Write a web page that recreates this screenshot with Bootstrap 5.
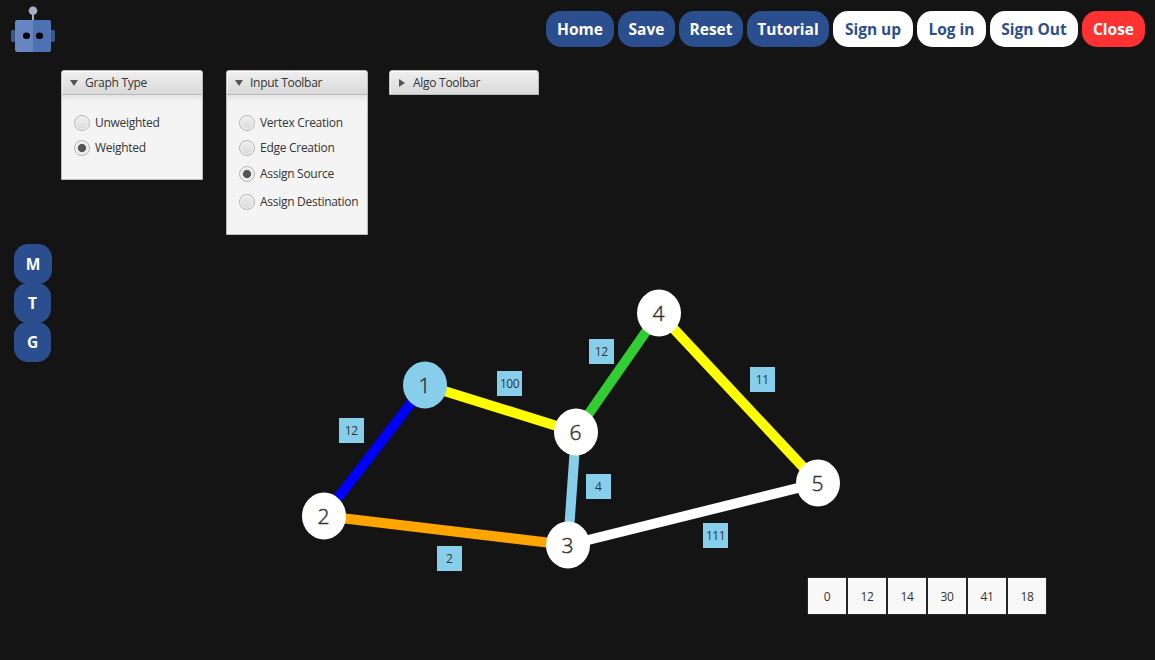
<!DOCTYPE html>
<html lang="en">
<head>
<meta charset="utf-8">
<meta name="viewport" content="width=device-width, initial-scale=1">
<title>Graph Visualizer</title>
<link rel="stylesheet" href="https://cdn.jsdelivr.net/npm/bootstrap@5.3.0/dist/css/bootstrap.min.css">
<style>
body{background:#141414;color:#333;font-family:"Open Sans","Noto Sans",sans-serif;font-size:12px;line-height:16px;overflow:hidden}
.app-btn{height:36px;border:0;border-radius:15px;padding:0;font-size:15.5px;line-height:34px;font-weight:700;background:#2b4f8e;color:#fff;text-align:center;white-space:nowrap}
.app-btn:hover{background:#35609f;color:#fff}
.app-btn.account{background:#fff;color:#2b4f8e}
.app-btn.quit{background:#ff3232}
.topbar{height:60px;padding:11px 10px 0 11px}
.robot{margin-top:-5px}
.side-rail{width:61px;padding:184px 0 0 14px}
.side-rail .app-btn{width:37px;height:40px;line-height:37px;border-radius:14px;margin-bottom:-1px}
.panels{padding-top:10px}
.tool-pane{border:1px solid #bababa;border-radius:3px 3px 0 0;background:#f4f4f4;overflow:hidden;letter-spacing:-.28px}
.tool-head{height:23px;padding:1px 0 0 8px;background:linear-gradient(#efefef,#d9d9d9);box-shadow:inset 0 1px #fff,inset 1px 0 #f5f5f5}
.tool-head svg{width:8px;height:8px;margin-right:7px}
.tool-body{border-top:1px solid #bababa;box-shadow:inset 0 6px 6px -4px #ddd;padding:20px 0 0 12px}
.choice{height:16px;gap:5px;white-space:nowrap}
.choice .form-check-input{width:16px;height:16px;margin:0;border:1px solid #b5b5b5;background:linear-gradient(#efefef,#dadada);box-shadow:inset 0 0 0 1px #f6f6f6;flex:none}
.choice .form-check-input:checked{background:radial-gradient(circle,#545454 0 3.7px,#e9e9e9 4.4px)}
.graph{position:absolute;left:0;top:0;width:1155px;height:660px;pointer-events:none}
.graph text{text-anchor:middle;fill:#333}
.dist{margin:0 108px 45px 0}
.dist span{width:40px;height:38px;border:1px solid #262626;background:#f8f8f8;line-height:38px;text-align:center;letter-spacing:-.3px}
</style>
</head>
<body>
<div class="vh-100 d-flex flex-column position-relative">
  <header class="topbar d-flex align-items-start">
    <svg class="robot" width="44" height="46" viewBox="0 0 44 46" aria-label="Robot">
      <path d="M0 25l1-1h3v12H1l-1-1zM44 25l-1-1h-3v12h3l1-1z" fill="#3b5788"/>
      <path d="M21 9h2v7h-2z" fill="#a5afc3"/><circle cx="22" cy="4.7" r="4.3" fill="#a5afc3"/>
      <path d="M6 14h16v32H6q-2 0-2-2V16q0-2 2-2z" fill="#6786c1"/>
      <path d="M22 14h16q2 0 2 2v28q0 2-2 2H22z" fill="#4d71b3"/>
      <ellipse cx="15.5" cy="29.8" rx="3.5" ry="3.2"/><ellipse cx="28.5" cy="29.8" rx="3.5" ry="3.2"/>
    </svg>
    <nav class="d-flex gap-1 ms-auto">
      <button class="btn app-btn" style="width:68px">Home</button>
      <button class="btn app-btn" style="width:57px">Save</button>
      <button class="btn app-btn" style="width:64px">Reset</button>
      <button class="btn app-btn" style="width:82px">Tutorial</button>
      <button class="btn app-btn account" style="width:80px">Sign up</button>
      <button class="btn app-btn account" style="width:69px">Log in</button>
      <button class="btn app-btn account" style="width:88px">Sign Out</button>
      <button class="btn app-btn quit" style="width:63px">Close</button>
    </nav>
  </header>
  <main class="d-flex flex-grow-1">
    <aside class="side-rail d-flex flex-column">
      <button class="btn app-btn" style="width:38px">M</button>
      <button class="btn app-btn">T</button>
      <button class="btn app-btn">G</button>
    </aside>
    <section class="panels d-flex align-items-start">
      <div class="tool-pane" style="width:142px;height:110px;margin-right:23px">
        <div class="tool-head d-flex align-items-center"><svg viewBox="0 0 8 8"><path d="M0 1h8L4 7z" fill="#555"/></svg><span>Graph Type</span></div>
        <div class="tool-body h-100">
          <label class="choice d-flex align-items-center" style="margin-bottom:9px"><input class="form-check-input" type="radio" name="type"><span>Unweighted</span></label>
          <label class="choice d-flex align-items-center"><input class="form-check-input" type="radio" name="type" checked><span>Weighted</span></label>
        </div>
      </div>
      <div class="tool-pane" style="width:142px;height:165px;margin-right:21px">
        <div class="tool-head d-flex align-items-center"><svg viewBox="0 0 8 8"><path d="M0 1h8L4 7z" fill="#555"/></svg><span>Input Toolbar</span></div>
        <div class="tool-body h-100">
          <label class="choice d-flex align-items-center" style="margin-bottom:9px"><input class="form-check-input" type="radio" name="mode"><span>Vertex Creation</span></label>
          <label class="choice d-flex align-items-center" style="margin-bottom:10px"><input class="form-check-input" type="radio" name="mode"><span>Edge Creation</span></label>
          <label class="choice d-flex align-items-center" style="margin-bottom:12px"><input class="form-check-input" type="radio" name="mode" checked><span>Assign Source</span></label>
          <label class="choice d-flex align-items-center"><input class="form-check-input" type="radio" name="mode"><span>Assign Destination</span></label>
        </div>
      </div>
      <div class="tool-pane" style="width:150px;height:25px">
        <div class="tool-head d-flex align-items-center"><svg viewBox="0 0 8 8"><path d="M1 0v8l6-4z" fill="#555"/></svg><span>Algo Toolbar</span></div>
      </div>
    </section>
  </main>
  <div class="dist d-flex align-self-end"><span>0</span><span>12</span><span>14</span><span>30</span><span>41</span><span>18</span></div>
  <svg class="graph" viewBox="0 0 1155 660">
    <g stroke-width="10">
      <path d="M425 385L324 516" stroke="#00f"/>
      <path d="M425 385L576 432" stroke="#ff0"/>
      <path d="M324 516L568 545" stroke="orange"/>
      <path d="M576 432L568 545" stroke="#87ceeb"/>
      <path d="M576 432L659 313" stroke="#32cd32"/>
      <path d="M659 313L818 483" stroke="#ff0"/>
      <path d="M568 545L818 483" stroke="#fff"/>
    </g>
    <g fill="#fff">
      <ellipse cx="425" cy="385" rx="22" ry="23.5" fill="#87ceeb"/>
      <ellipse cx="324" cy="516" rx="22" ry="23.5"/>
      <ellipse cx="568" cy="545" rx="22" ry="23.5"/>
      <ellipse cx="659" cy="313" rx="22" ry="23.5"/>
      <ellipse cx="818" cy="483" rx="22" ry="23.5"/>
      <ellipse cx="576" cy="432" rx="22" ry="23.5"/>
    </g>
    <g font-size="21" font-weight="300" stroke="#333" stroke-width=".45">
      <text x="424.5" y="393">1</text><text x="323.5" y="524">2</text><text x="567.5" y="553">3</text>
      <text x="658.5" y="321">4</text><text x="817.5" y="491">5</text><text x="575.5" y="440">6</text>
    </g>
    <g fill="#87ceeb">
      <path d="M339 418h25v25h-25zM497 371h25v25h-25zM589 339h25v25h-25zM750 367h25v25h-25zM586 474h25v25h-25zM703 523h25v25h-25zM437 546h25v25h-25z"/>
    </g>
    <g font-size="12" letter-spacing="-.4">
      <text x="351.3" y="435">12</text><text x="509.6" y="388">100</text><text x="601.3" y="356">12</text>
      <text x="762.3" y="384">11</text><text x="598.3" y="491">4</text><text x="715.6" y="540">111</text><text x="449.3" y="563">2</text>
    </g>
  </svg>
</div>
<script src="https://cdn.jsdelivr.net/npm/bootstrap@5.3.0/dist/js/bootstrap.bundle.min.js"></script>
</body>
</html>
